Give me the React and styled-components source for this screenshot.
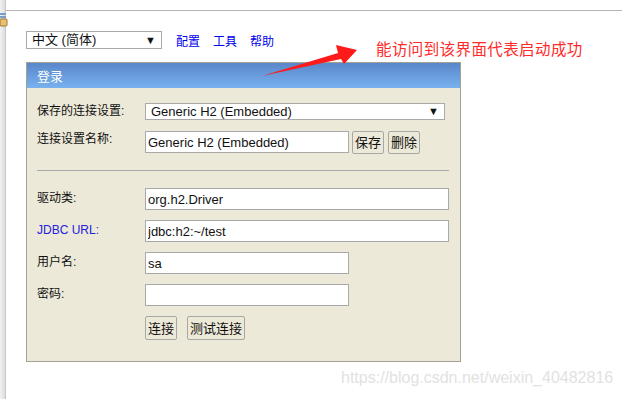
import styled, { createGlobalStyle } from 'styled-components'

const GlobalStyle = createGlobalStyle`
    html, body {
        margin: 0;
        padding: 0;
        background: #ffffff;
    }
    body {
        font-family: "Liberation Sans", "Noto Sans CJK SC", sans-serif;
        font-size: 13px;
        color: #000;
    }
`

const Page = styled.div`
    position: relative;
    width: 622px;
    height: 399px;
    overflow: hidden;
    display: flex;
    flex-direction: column;
`

const TopBar = styled.div`
    height: 10px;
    border-bottom: 1px solid #b4b4b4;
    margin-left: 5px;
`

const Body = styled.div`
    flex: 1;
    display: flex;
`

const LeftStrip = styled.div`
    width: 5px;
    margin-top: -11px;
    background: linear-gradient(to right, #f2f2f2, #dcdcdc);
    border-right: 1px solid #c8c8c8;
    position: relative;
`

const Content = styled.div`
    flex: 1;
    padding: 20px 0 0 20px;
`

const Toolbar = styled.div`
    display: flex;
    align-items: center;
    height: 18px;
    margin-bottom: 13px;
`

const FakeSelect = styled.div`
    box-sizing: border-box;
    width: ${p => p.$width}px;
    height: ${p => p.$height}px;
    line-height: ${p => p.$height - 2}px;
    background: #fff;
    border: 1px solid #a9a9a9;
    display: flex;
    align-items: center;
    justify-content: space-between;
    padding: 0 5px 0 5px;
    font-size: 13px;
    color: #111;
`

const Caret = styled.span`
    font-size: 11px;
    line-height: 11px;
    color: #111;
`

const TopLink = styled.a`
    color: #0000ee;
    text-decoration: none;
    font-size: 12px;
    margin-left: ${p => p.$gap}px;
    padding-top: 1px;
`

const Panel = styled.div`
    box-sizing: border-box;
    width: 435px;
    height: 300px;
    border: 1px solid #a5a295;
    background: #ece9d8;
`

const PanelHeader = styled.div`
    height: 25px;
    background: linear-gradient(to bottom, #5987c9, #79b1ef);
    color: #fff;
    font-size: 13px;
    display: flex;
    align-items: center;
    padding-left: 10px;
`

const PanelBody = styled.div`
    padding: 15px 0 0 10px;
`

const Row = styled.div`
    display: flex;
    align-items: flex-start;
    height: ${p => p.$h ?? 22}px;
    margin-bottom: ${p => p.$mb ?? 10}px;
`

const Label = styled.div`
    width: 108px;
    font-size: 12px;
    line-height: 14px;
    padding-top: ${p => p.$pt ?? 3}px;
    color: ${p => (p.$blue ? '#2222dd' : '#111')};
`

const Field = styled.input`
    box-sizing: border-box;
    width: ${p => p.$width}px;
    height: 22px;
    border: 1px solid #a9a9a9;
    background: #fff;
    font-family: "Liberation Sans", "Noto Sans CJK SC", sans-serif;
    font-size: 13px;
    color: #111;
    padding: 0 2px;
    margin: 0;
    outline: none;
`

const Button = styled.button`
    box-sizing: border-box;
    height: ${p => p.$height ?? 23}px;
    padding: 0 2px;
    margin: 0 0 0 ${p => p.$ml ?? 0}px;
    border: 1px solid #a7a7a7;
    border-radius: 2px;
    background: #ece9d8;
    font-family: "Liberation Sans", "Noto Sans CJK SC", sans-serif;
    font-size: 13px;
    line-height: 15px;
    color: #111;
`

const Divider = styled.hr`
    border: none;
    border-top: 1px solid #a8a8a8;
    margin: 0 11px 17px 0;
    height: 0;
`

const Annotation = styled.div`
    position: absolute;
    left: 376px;
    top: 37px;
    color: #ff2a2a;
    font-size: 15.5px;
    letter-spacing: 0.4px;
`

const Watermark = styled.div`
    position: absolute;
    left: 341px;
    top: 369px;
    color: #e2e2e2;
    font-size: 16px;
`

const Overlay = styled.svg`
    position: absolute;
    left: 0;
    top: 0;
    pointer-events: none;
`

const App = () => {
    return <Page>
        <GlobalStyle />
        <TopBar />
        <Body>
            <LeftStrip>
                <svg width="8" height="16" style={{ position: 'absolute', left: 0, top: 12 }}>
                    <rect x="0" y="1" width="6" height="2" fill="#7a9cc8" />
                    <rect x="0" y="4" width="6" height="2" fill="#7a9cc8" />
                    <rect x="0" y="7" width="7" height="7" rx="1" fill="#e8c070" stroke="#a07830" strokeWidth="1" />
                </svg>
            </LeftStrip>
            <Content>
                <Toolbar>
                    <FakeSelect $width={136} $height={18}>
                        <span>中文 (简体)</span>
                        <Caret>▼</Caret>
                    </FakeSelect>
                    <TopLink href="#" $gap={14}>配置</TopLink>
                    <TopLink href="#" $gap={13}>工具</TopLink>
                    <TopLink href="#" $gap={13}>帮助</TopLink>
                </Toolbar>
                <Panel>
                    <PanelHeader>登录</PanelHeader>
                    <PanelBody>
                        <Row $h={17} $mb={11}>
                            <Label $pt={1}>保存的连接设置:</Label>
                            <FakeSelect $width={300} $height={17}>
                                <span>Generic H2 (Embedded)</span>
                                <Caret>▼</Caret>
                            </FakeSelect>
                        </Row>
                        <Row $h={23} $mb={16}>
                            <Label $pt={1}>连接设置名称:</Label>
                            <Field $width={204} readOnly value="Generic H2 (Embedded)" />
                            <Button $ml={3}>保存</Button>
                            <Button $ml={4}>删除</Button>
                        </Row>
                        <Divider />
                        <Row>
                            <Label>驱动类:</Label>
                            <Field $width={304} readOnly value="org.h2.Driver" />
                        </Row>
                        <Row>
                            <Label $blue>JDBC URL:</Label>
                            <Field $width={304} readOnly value="jdbc:h2:~/test" />
                        </Row>
                        <Row>
                            <Label>用户名:</Label>
                            <Field $width={204} readOnly value="sa" />
                        </Row>
                        <Row>
                            <Label>密码:</Label>
                            <Field $width={204} type="password" readOnly value="" />
                        </Row>
                        <Row $h={24}>
                            <Label />
                            <Button $height={24}>连接</Button>
                            <Button $height={24} $ml={10}>测试连接</Button>
                        </Row>
                    </PanelBody>
                </Panel>
            </Content>
        </Body>
        <Overlay width="622" height="399">
            <polygon points="262,76 338,53 336,45 357,50 344,64 341,59" fill="#ff1a1a" />
        </Overlay>
        <Annotation>能访问到该界面代表启动成功</Annotation>
        <Watermark>https://blog.csdn.net/weixin_40482816</Watermark>
    </Page>
}

export default App
